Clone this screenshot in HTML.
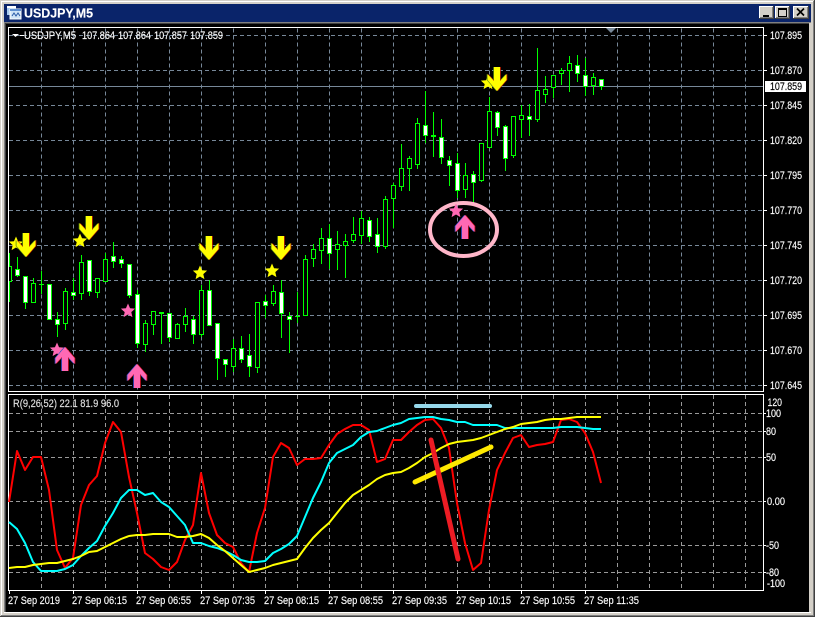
<!DOCTYPE html>
<html><head><meta charset="utf-8"><title>USDJPY,M5</title>
<style>html,body{margin:0;padding:0;background:#d4d0c8;width:815px;height:617px;overflow:hidden}svg{display:block}text{font-family:"Liberation Sans",sans-serif;font-size:11px;fill:#fff;stroke:#fff;stroke-width:.15}</style></head>
<body>
<svg width="815" height="617" viewBox="0 0 815 617" xmlns="http://www.w3.org/2000/svg">
<defs>
<path id="dn" d="M-3 -24H3V-10L9.500 -17V-11L0 0L-9.500 -11V-17L-3 -10Z"/>
<path id="st" d="M0 -7.500L2.050 -2.800L7.130 -2.320L3.300 1.080L4.410 6.070L0 3.500L-4.410 6.070L-3.300 1.080L-7.130 -2.320L-2.050 -2.800Z"/>
<g id="ya"><use href="#dn" x="-.8" fill="#5a8a10"/><use href="#dn" x=".8" fill="#c02000"/><use href="#dn" fill="#ffff00"/></g>
<g id="pa"><g transform="scale(1,-1)"><use href="#dn" x="-.8" fill="#3a50d0"/><use href="#dn" x=".8" fill="#d01020"/><use href="#dn" fill="#ff69b4"/></g></g>
</defs>
<!-- window chrome -->
<rect width="815" height="617" fill="#d4d0c8"/>
<rect x="1" y="1" width="813" height="1" fill="#fff"/>
<rect x="1" y="1" width="1" height="615" fill="#fff"/>
<rect x="814" y="0" width="1" height="617" fill="#404040"/>
<rect x="0" y="616" width="815" height="1" fill="#404040"/>
<rect x="813" y="1" width="1" height="615" fill="#808080"/>
<rect x="1" y="615" width="813" height="1" fill="#808080"/>
<rect x="4" y="4" width="807" height="18" fill="#0a246a"/>
<rect x="4" y="22" width="807" height="591" fill="#808080"/>
<rect x="5" y="23" width="805" height="589" fill="#404040"/>
<rect x="6" y="24" width="803" height="588" fill="#000"/>
<rect x="809" y="23" width="2" height="590" fill="#d4d0c8"/>
<rect x="4" y="612" width="807" height="1" fill="#fff"/>
<!-- title icon -->
<rect x="7" y="6" width="9" height="9" fill="#a6caf0"/><rect x="7" y="6" width="9" height="2" fill="#fff"/>
<rect x="10" y="9" width="11" height="10" fill="#cfe3f7" stroke="#fff" stroke-width="1"/>
<rect x="10" y="9" width="11" height="2" fill="#5f8fd0"/>
<path d="M12 16l2-3 2 3 2-3 2 3" fill="none" stroke="#2a5aa8" stroke-width="1"/>
<text x="24" y="17.500" textLength="69" lengthAdjust="spacingAndGlyphs" style="font-size:13px;font-weight:bold">USDJPY,M5</text>
<!-- buttons -->
<g shape-rendering="crispEdges">
<rect x="759" y="6" width="15" height="13" fill="#404040"/><rect x="759" y="6" width="14" height="12" fill="#fff"/><rect x="760" y="7" width="13" height="11" fill="#808080"/><rect x="760" y="7" width="12" height="10" fill="#d4d0c8"/>
<rect x="763" y="15" width="6" height="2" fill="#000"/>
<rect x="775" y="6" width="15" height="13" fill="#404040"/><rect x="775" y="6" width="14" height="12" fill="#fff"/><rect x="776" y="7" width="13" height="11" fill="#808080"/><rect x="776" y="7" width="12" height="10" fill="#d4d0c8"/>
<rect x="778.500" y="8.500" width="8" height="8" fill="none" stroke="#000"/><rect x="778" y="8" width="9" height="2" fill="#000"/>
<rect x="793" y="6" width="16" height="13" fill="#404040"/><rect x="793" y="6" width="15" height="12" fill="#fff"/><rect x="794" y="7" width="14" height="11" fill="#808080"/><rect x="794" y="7" width="13" height="10" fill="#d4d0c8"/>
</g>
<path d="M797 8.500L804 15.500M804 8.500L797 15.500" stroke="#000" stroke-width="1.700" fill="none"/>
<!-- grid -->
<g shape-rendering="crispEdges" fill="none">
<path stroke="#778899" stroke-dasharray="4 3" d="M9 35H763M9 70H763M9 105H763M9 140H763M9 175H763M9 210H763M9 245H763M9 280H763M9 315H763M9 350H763M9 385H763M41.500 28V391M73.500 28V391M105.500 28V391M137.500 28V391M169.500 28V391M201.500 28V391M233.500 28V391M265.500 28V391M297.500 28V391M329.500 28V391M361.500 28V391M393.500 28V391M425.500 28V391M457.500 28V391M489.500 28V391M521.500 28V391M553.500 28V391M585.500 28V391M617.500 28V391M649.500 28V391M681.500 28V391M713.500 28V391M745.500 28V391" transform="translate(0,.5)"/>
<path stroke="#999" stroke-dasharray="4 3" d="M9 413.500H763M9 431.500H763M9 457.500H763M9 501.500H763M9 545.500H763M9 572.500H763M41.500 395V590M73.500 395V590M105.500 395V590M137.500 395V590M169.500 395V590M201.500 395V590M233.500 395V590M265.500 395V590M297.500 395V590M329.500 395V590M361.500 395V590M393.500 395V590M425.500 395V590M457.500 395V590M489.500 395V590M521.500 395V590M553.500 395V590M585.500 395V590M617.500 395V590M649.500 395V590M681.500 395V590M713.500 395V590M745.500 395V590"/>
<path stroke="#778899" d="M9 86.500H763"/>
<!-- candles -->
<path stroke="#00ff00" d="M9.500 253V302M17.500 257V277M25.500 276V309M33.500 278V302M41.500 271V294M49.500 284V319M57.500 312V337M65.500 288V330M73.500 278V300M81.500 255V300M89.500 260V296M97.500 278V298M105.500 253V282M113.500 242V268M121.500 256V268M129.500 264V298M137.500 290V348M145.500 320V352M153.500 311V335M161.500 312V344M169.500 313V342M177.500 323V339M185.500 308V332M193.500 316V344M201.500 285V337M209.500 280V325M217.500 323V380M225.500 359V377M233.500 339V372M241.500 336V363M249.500 334V377M257.500 302V373M265.500 295V318M273.500 285V306M281.500 280V338M289.500 312V353M297.500 292V323M305.500 255V316M313.500 244V267M321.500 228V264M329.500 224V269M337.500 231V270M345.500 234V278M353.500 217V243M361.500 211V244M369.500 217V242M377.500 218V253M385.500 196V249M393.500 183V228M401.500 144V191M409.500 156V191M417.500 118V169M425.500 91V143M433.500 112V157M441.500 119V164M449.500 156V186M457.500 153V198M465.500 163V198M473.500 171V203M481.500 143V182M489.500 97V147M497.500 111V136M505.500 125V171M513.500 116V158M521.500 105V138M529.500 104V136M537.500 48V122M545.500 76V103M553.500 75V98M561.500 68V85M569.500 56V92M577.500 55V82M585.500 58V96M593.500 73V95M601.500 79V90M39 284.500H44M159 312.500H164M159 313.500H164M295 316.500H300M431 135.500H436M431 136.500H436"/>
<path fill="#000" stroke="#00ff00" d="M8.500 266.500H11.500V281.500H8.500ZM31.500 283.500h4V302.500h-4zM63.500 291.500h4V323.500h-4zM79.500 262.500h4V293.500h-4zM95.500 278.500h4V292.500h-4zM103.500 259.500h4V281.500h-4zM143.500 323.500h4V344.500h-4zM151.500 311.500h4V324.500h-4zM175.500 324.500h4V338.500h-4zM183.500 316.500h4V324.500h-4zM199.500 290.500h4V334.500h-4zM231.500 348.500h4V366.500h-4zM255.500 302.500h4V367.500h-4zM271.500 291.500h4V303.500h-4zM303.500 259.500h4V315.500h-4zM311.500 249.500h4V258.500h-4zM319.500 238.500h4V250.500h-4zM335.500 244.500h4V249.500h-4zM343.500 241.500h4V245.500h-4zM351.500 234.500h4V240.500h-4zM359.500 218.500h4V235.500h-4zM383.500 199.500h4V246.500h-4zM391.500 185.500h4V198.500h-4zM399.500 168.500h4V186.500h-4zM407.500 158.500h4V168.500h-4zM415.500 123.500h4V164.500h-4zM463.500 175.500h4V189.500h-4zM479.500 143.500h4V180.500h-4zM487.500 111.500h4V147.500h-4zM511.500 116.500h4V155.500h-4zM519.500 115.500h4V119.500h-4zM535.500 90.500h4V119.500h-4zM543.500 89.500h4V94.500h-4zM551.500 75.500h4V87.500h-4zM559.500 70.500h4V73.500h-4zM567.500 63.500h4V70.500h-4zM591.500 77.500h4V85.500h-4z"/>
<path fill="#fff" stroke="#00ff00" d="M15.500 269.500h4V275.500h-4zM23.500 276.500h4V302.500h-4zM47.500 284.500h4V319.500h-4zM55.500 319.500h4V324.500h-4zM71.500 292.500h4V295.500h-4zM87.500 260.500h4V291.500h-4zM111.500 256.500h4V261.500h-4zM119.500 259.500h4V263.500h-4zM127.500 264.500h4V295.500h-4zM135.500 294.500h4V343.500h-4zM167.500 313.500h4V337.500h-4zM191.500 319.500h4V334.500h-4zM207.500 290.500h4V325.500h-4zM215.500 323.500h4V358.500h-4zM223.500 359.500h4V364.500h-4zM239.500 348.500h4V359.500h-4zM247.500 355.500h4V366.500h-4zM263.500 301.500h4V305.500h-4zM279.500 292.500h4V313.500h-4zM287.500 316.500h4V319.500h-4zM327.500 238.500h4V253.500h-4zM367.500 220.500h4V236.500h-4zM375.500 234.500h4V246.500h-4zM423.500 125.500h4V135.500h-4zM439.500 137.500h4V157.500h-4zM447.500 160.500h4V165.500h-4zM455.500 163.500h4V190.500h-4zM471.500 174.500h4V182.500h-4zM495.500 112.500h4V127.500h-4zM503.500 126.500h4V158.500h-4zM527.500 116.500h4V119.500h-4zM575.500 65.500h4V73.500h-4zM583.500 75.500h4V86.500h-4zM599.500 79.500h4V86.500h-4z"/>
<!-- ticks -->
<path stroke="#fff" d="M764 35.500h3M764 70.500h3M764 105.500h3M764 140.500h3M764 175.500h3M764 210.500h3M764 245.500h3M764 280.500h3M764 315.500h3M764 350.500h3M764 385.500h3M764 413.500h2M764 431.500h2M764 457.500h2M764 501.500h2M764 545.500h2M764 572.500h2M9.500 591v3M73.500 591v3M137.500 591v3M201.500 591v3M265.500 591v3M329.500 591v3M393.500 591v3M457.500 591v3M521.500 591v3M585.500 591v3"/>
<!-- frames -->
<rect x="8.500" y="27.500" width="755" height="364" stroke="#fff"/>
<rect x="8.500" y="394.500" width="755" height="196" stroke="#fff"/>
</g>
<!-- top marker -->
<path d="M606 28H616L611 33Z" fill="#778899"/>
<!-- legend -->
<path d="M12 34H19L15.500 37Z" fill="#fff"/>
<g>
<path d="M20 35.500H24" stroke="#fff"/>
<text x="24" y="39" textLength="52" lengthAdjust="spacingAndGlyphs">USDJPY,M5</text>
<text x="82" y="39" textLength="33" lengthAdjust="spacingAndGlyphs">107.864</text>
<text x="118" y="39" textLength="33" lengthAdjust="spacingAndGlyphs">107.864</text>
<text x="154" y="39" textLength="33" lengthAdjust="spacingAndGlyphs">107.857</text>
<text x="190" y="39" textLength="33" lengthAdjust="spacingAndGlyphs">107.859</text>
</g>
<!-- price labels -->
<g>
<text x="770" y="39" textLength="32" lengthAdjust="spacingAndGlyphs">107.895</text>
<text x="770" y="74" textLength="32" lengthAdjust="spacingAndGlyphs">107.870</text>
<text x="770" y="109" textLength="32" lengthAdjust="spacingAndGlyphs">107.845</text>
<text x="770" y="144" textLength="32" lengthAdjust="spacingAndGlyphs">107.820</text>
<text x="770" y="179" textLength="32" lengthAdjust="spacingAndGlyphs">107.795</text>
<text x="770" y="214" textLength="32" lengthAdjust="spacingAndGlyphs">107.770</text>
<text x="770" y="249" textLength="32" lengthAdjust="spacingAndGlyphs">107.745</text>
<text x="770" y="284" textLength="32" lengthAdjust="spacingAndGlyphs">107.720</text>
<text x="770" y="319" textLength="32" lengthAdjust="spacingAndGlyphs">107.695</text>
<text x="770" y="354" textLength="32" lengthAdjust="spacingAndGlyphs">107.670</text>
<text x="770" y="389" textLength="32" lengthAdjust="spacingAndGlyphs">107.645</text>
</g>
<rect x="765" y="81" width="41" height="11" fill="#fff"/>
<text x="770" y="90" textLength="32" lengthAdjust="spacingAndGlyphs" style="fill:#000;stroke:#000">107.859</text>
<!-- lower labels -->
<g>
<text x="767.500" y="406" textLength="14.500" lengthAdjust="spacingAndGlyphs">120</text>
<text x="766" y="417" textLength="15" lengthAdjust="spacingAndGlyphs">100</text>
<text x="766" y="435" textLength="10" lengthAdjust="spacingAndGlyphs">80</text>
<text x="766" y="461" textLength="10" lengthAdjust="spacingAndGlyphs">50</text>
<text x="767" y="505" textLength="18" lengthAdjust="spacingAndGlyphs">0.00</text>
<text x="766" y="549" textLength="13" lengthAdjust="spacingAndGlyphs">-50</text>
<text x="766" y="576" textLength="13" lengthAdjust="spacingAndGlyphs">-80</text>
<text x="767" y="587" textLength="18" lengthAdjust="spacingAndGlyphs">-100</text>
</g>
<!-- time labels -->
<g>
<text x="8" y="604" textLength="52" lengthAdjust="spacingAndGlyphs">27 Sep 2019</text>
<text x="72" y="604" textLength="55" lengthAdjust="spacingAndGlyphs">27 Sep 06:15</text>
<text x="136" y="604" textLength="55" lengthAdjust="spacingAndGlyphs">27 Sep 06:55</text>
<text x="200" y="604" textLength="55" lengthAdjust="spacingAndGlyphs">27 Sep 07:35</text>
<text x="264" y="604" textLength="55" lengthAdjust="spacingAndGlyphs">27 Sep 08:15</text>
<text x="328" y="604" textLength="55" lengthAdjust="spacingAndGlyphs">27 Sep 08:55</text>
<text x="392" y="604" textLength="55" lengthAdjust="spacingAndGlyphs">27 Sep 09:35</text>
<text x="456" y="604" textLength="55" lengthAdjust="spacingAndGlyphs">27 Sep 10:15</text>
<text x="520" y="604" textLength="55" lengthAdjust="spacingAndGlyphs">27 Sep 10:55</text>
<text x="584" y="604" textLength="55" lengthAdjust="spacingAndGlyphs">27 Sep 11:35</text>
</g>
<text x="13" y="407" textLength="106" lengthAdjust="spacingAndGlyphs" style="fill:#e0e0e0;stroke:#e0e0e0">R(9,26,52) 22.1 81.9 96.0</text>
<!-- oscillators -->
<g fill="none" stroke-width="2" stroke-linejoin="round">
<polyline stroke="#ff0000" points="9,502 17,451 25,470 33,457 41,457 49,490 57,550 65,568 73,558 81,505 89,485 97,476 105,443 113,422 121,432 129,477 137,513 145,553 153,559 161,567 169,570 177,562 185,540 193,525 201,473 209,513 217,535 225,543 233,547 241,563 249,572 257,533 265,508 273,457 281,443 289,448 297,465 305,459 313,459 321,458 329,445 337,434 345,429 353,425 361,425 369,430 377,462 385,459 393,440 401,440 409,432 417,425 425,420 433,419 441,428 449,448 457,503 465,543 473,570 481,563 489,510 497,470 505,453 513,438 521,435 529,447 537,445 545,444 553,442 561,420 569,419 577,422 585,433 593,452 601,483"/>
<polyline stroke="#00ffff" points="9,522 17,529 25,543 33,562 41,571 49,571 57,571 65,569 73,565 81,556 89,548 97,541 105,526 113,513 121,498 129,490 137,490 145,495 153,493 161,502 169,507 177,516 185,525 193,543 201,543 209,546 217,548 225,551 233,555 241,560 249,562 257,562 265,561 273,553 281,549 289,544 297,536 305,517 313,498 321,482 329,463 337,453 345,449 353,445 361,437 369,432 377,431 385,428 393,425 401,423 409,419 417,418 425,417 433,417 441,419 449,420 457,422 465,422 473,425 481,425 489,425 497,425 505,428 513,428 521,428 529,428 537,428 545,428 553,428 561,427 569,427 577,427 585,428 593,429 601,429"/>
<polyline stroke="#ffff00" points="9,568 17,567 25,567 33,565 41,564 49,563 57,563 65,561 73,559 81,556 89,552 97,551 105,547 113,543 121,539 129,536 137,535 145,535 153,534 161,534 169,534 177,537 185,537 193,536 201,534 209,538 217,545 225,551 233,558 241,565 249,572 257,570 265,568 273,565 281,563 289,561 297,559 305,548 313,538 321,530 329,523 337,513 345,503 353,495 361,490 369,485 377,479 385,475 393,473 401,472 409,468 417,463 425,457 433,453 441,448 449,444 457,442 465,441 473,440 481,438 489,435 497,432 505,429 513,427 521,424 529,423 537,422 545,420 553,419 561,419 569,418 577,417 585,417 593,417 601,417"/>
</g>
<!-- drawn trend marks -->
<g fill="none" stroke-linecap="round">
<path d="M416 406H490" stroke="#96d8ea" stroke-width="4"/>
<path d="M415 482L491 447" stroke="#ffe900" stroke-width="5"/>
<path d="M431 440L458 559" stroke="#ed1c24" stroke-width="5"/>
</g>
<ellipse cx="463.500" cy="229.500" rx="33.500" ry="26.500" fill="none" stroke="#ffb6c9" stroke-width="4"/>
<!-- stars and arrows -->
<g>
<use href="#st" x="16" y="244" fill="#ffff00"/>
<use href="#ya" x="26" y="257"/>
<use href="#ya" x="89" y="240"/>
<use href="#st" x="80" y="241" fill="#ffff00"/>
<use href="#st" x="200" y="273" fill="#ffff00"/>
<use href="#ya" x="209" y="260"/>
<use href="#st" x="272" y="271" fill="#ffff00"/>
<use href="#ya" x="281" y="260"/>
<use href="#st" x="488" y="83" fill="#ffff00"/>
<use href="#ya" x="497" y="91"/>
<use href="#st" x="128" y="311" fill="#ff69b4"/>
<use href="#st" x="57" y="350" fill="#ff69b4"/>
<use href="#st" x="456" y="211" fill="#ff69b4"/>
<use href="#pa" x="65" y="347"/>
<use href="#pa" x="137" y="364"/>
<use href="#pa" x="465" y="215"/>
</g>
</svg>
</body></html>
